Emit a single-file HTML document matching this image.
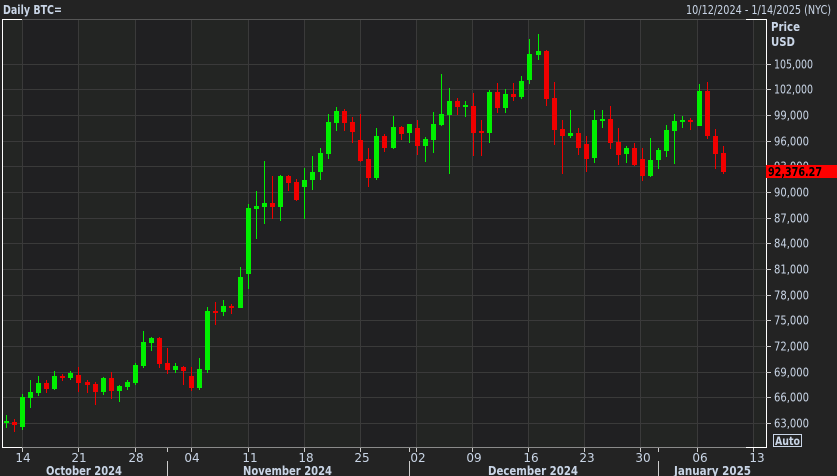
<!DOCTYPE html>
<html><head><meta charset="utf-8"><style>
html,body{margin:0;padding:0;background:#232323;width:837px;height:476px;overflow:hidden}
svg{display:block}
text{font-family:"DejaVu Sans","Liberation Sans",sans-serif;fill:#c9d5e6}
</style></head><body>
<svg width="837" height="476" viewBox="0 0 837 476" xmlns="http://www.w3.org/2000/svg">
<rect x="0" y="0" width="837" height="476" fill="#232323"/>
<rect x="2" y="19" width="764" height="428" fill="#202022"/>
<g fill="#232523">
<rect x="2" y="19" width="20" height="428"/><rect x="78" y="19" width="57" height="428"/><rect x="191" y="19" width="57" height="428"/><rect x="304" y="19" width="56" height="428"/><rect x="416" y="19" width="56" height="428"/><rect x="528" y="19" width="56" height="428"/><rect x="640" y="19" width="57" height="428"/><rect x="753" y="19" width="13" height="428"/>
</g>
<g stroke="#3a3a3a" stroke-width="1">
<line x1="22.5" y1="19" x2="22.5" y2="447"/><line x1="78.5" y1="19" x2="78.5" y2="447"/><line x1="135.5" y1="19" x2="135.5" y2="447"/><line x1="191.5" y1="19" x2="191.5" y2="447"/><line x1="248.5" y1="19" x2="248.5" y2="447"/><line x1="304.5" y1="19" x2="304.5" y2="447"/><line x1="360.5" y1="19" x2="360.5" y2="447"/><line x1="416.5" y1="19" x2="416.5" y2="447"/><line x1="472.5" y1="19" x2="472.5" y2="447"/><line x1="528.5" y1="19" x2="528.5" y2="447"/><line x1="584.5" y1="19" x2="584.5" y2="447"/><line x1="640.5" y1="19" x2="640.5" y2="447"/><line x1="697.5" y1="19" x2="697.5" y2="447"/><line x1="753.5" y1="19" x2="753.5" y2="447"/>
<line x1="2" y1="64.5" x2="766" y2="64.5"/><line x1="2" y1="89.5" x2="766" y2="89.5"/><line x1="2" y1="115.5" x2="766" y2="115.5"/><line x1="2" y1="141.5" x2="766" y2="141.5"/><line x1="2" y1="166.5" x2="766" y2="166.5"/><line x1="2" y1="192.5" x2="766" y2="192.5"/><line x1="2" y1="218.5" x2="766" y2="218.5"/><line x1="2" y1="243.5" x2="766" y2="243.5"/><line x1="2" y1="269.5" x2="766" y2="269.5"/><line x1="2" y1="295.5" x2="766" y2="295.5"/><line x1="2" y1="320.5" x2="766" y2="320.5"/><line x1="2" y1="346.5" x2="766" y2="346.5"/><line x1="2" y1="372.5" x2="766" y2="372.5"/><line x1="2" y1="397.5" x2="766" y2="397.5"/><line x1="2" y1="423.5" x2="766" y2="423.5"/>
</g>
<line x1="2" y1="19.5" x2="766" y2="19.5" stroke="#555" />
<line x1="2" y1="447.5" x2="766" y2="447.5" stroke="#8a8a8a" />
<g stroke="#fff" stroke-width="1" fill="none">
<polyline points="2.5,447 2.5,19.5 22,19.5"/>
<polyline points="746,19.5 766.5,19.5 766.5,447.5 746,447.5"/>
<line x1="2" y1="447.5" x2="22" y2="447.5"/>
</g>
<g stroke="#ccc">
<line x1="766" y1="64.5" x2="771" y2="64.5"/><line x1="766" y1="89.5" x2="771" y2="89.5"/><line x1="766" y1="115.5" x2="771" y2="115.5"/><line x1="766" y1="141.5" x2="771" y2="141.5"/><line x1="766" y1="192.5" x2="771" y2="192.5"/><line x1="766" y1="218.5" x2="771" y2="218.5"/><line x1="766" y1="243.5" x2="771" y2="243.5"/><line x1="766" y1="269.5" x2="771" y2="269.5"/><line x1="766" y1="295.5" x2="771" y2="295.5"/><line x1="766" y1="320.5" x2="771" y2="320.5"/><line x1="766" y1="346.5" x2="771" y2="346.5"/><line x1="766" y1="372.5" x2="771" y2="372.5"/><line x1="766" y1="397.5" x2="771" y2="397.5"/><line x1="766" y1="423.5" x2="771" y2="423.5"/>
<line x1="22.5" y1="448" x2="22.5" y2="452"/><line x1="78.5" y1="448" x2="78.5" y2="452"/><line x1="135.5" y1="448" x2="135.5" y2="452"/><line x1="191.5" y1="448" x2="191.5" y2="452"/><line x1="248.5" y1="448" x2="248.5" y2="452"/><line x1="304.5" y1="448" x2="304.5" y2="452"/><line x1="360.5" y1="448" x2="360.5" y2="452"/><line x1="416.5" y1="448" x2="416.5" y2="452"/><line x1="472.5" y1="448" x2="472.5" y2="452"/><line x1="528.5" y1="448" x2="528.5" y2="452"/><line x1="584.5" y1="448" x2="584.5" y2="452"/><line x1="640.5" y1="448" x2="640.5" y2="452"/><line x1="697.5" y1="448" x2="697.5" y2="452"/><line x1="753.5" y1="448" x2="753.5" y2="452"/>
<line x1="167.5" y1="448" x2="167.5" y2="452"/><line x1="409.5" y1="448" x2="409.5" y2="452"/><line x1="658.5" y1="448" x2="658.5" y2="452"/>
<line x1="167.5" y1="461" x2="167.5" y2="476"/><line x1="409.5" y1="461" x2="409.5" y2="476"/><line x1="658.5" y1="461" x2="658.5" y2="476"/>
</g>
<text x="3" y="14" font-size="12" font-weight="bold" textLength="59" lengthAdjust="spacingAndGlyphs">Daily BTC=</text>
<text x="686" y="14" font-size="12" textLength="145" lengthAdjust="spacingAndGlyphs">10/12/2024 - 1/14/2025 (NYC)</text>
<text x="771" y="31" font-size="12" font-weight="bold" textLength="29" lengthAdjust="spacingAndGlyphs">Price</text>
<text x="771" y="46" font-size="12" font-weight="bold" textLength="24" lengthAdjust="spacingAndGlyphs">USD</text>
<g font-size="12">
<text x="774" y="68.5" textLength="39" lengthAdjust="spacingAndGlyphs">105,000</text><text x="774" y="93.5" textLength="39" lengthAdjust="spacingAndGlyphs">102,000</text><text x="774" y="119.5" textLength="35" lengthAdjust="spacingAndGlyphs">99,000</text><text x="774" y="145.5" textLength="35" lengthAdjust="spacingAndGlyphs">96,000</text><text x="774" y="170.5" textLength="35" lengthAdjust="spacingAndGlyphs">93,000</text><text x="774" y="196.5" textLength="35" lengthAdjust="spacingAndGlyphs">90,000</text><text x="774" y="222.5" textLength="35" lengthAdjust="spacingAndGlyphs">87,000</text><text x="774" y="247.5" textLength="35" lengthAdjust="spacingAndGlyphs">84,000</text><text x="774" y="273.5" textLength="35" lengthAdjust="spacingAndGlyphs">81,000</text><text x="774" y="299.5" textLength="35" lengthAdjust="spacingAndGlyphs">78,000</text><text x="774" y="324.5" textLength="35" lengthAdjust="spacingAndGlyphs">75,000</text><text x="774" y="350.5" textLength="35" lengthAdjust="spacingAndGlyphs">72,000</text><text x="774" y="376.5" textLength="35" lengthAdjust="spacingAndGlyphs">69,000</text><text x="774" y="401.5" textLength="35" lengthAdjust="spacingAndGlyphs">66,000</text><text x="774" y="427.5" textLength="35" lengthAdjust="spacingAndGlyphs">63,000</text>
</g>
<rect x="766" y="165" width="71" height="13" fill="#ff0000"/>
<text x="768" y="176" font-size="12" font-weight="bold" style="fill:#000" textLength="54" lengthAdjust="spacingAndGlyphs">92,376.27</text>
<rect x="773.5" y="434.5" width="28" height="12" fill="none" stroke="#c9d5e6"/>
<text x="775" y="445" font-size="11.5" font-weight="bold" textLength="25" lengthAdjust="spacingAndGlyphs">Auto</text>
<g font-size="12" text-anchor="middle">
<text x="23" y="462">14</text><text x="79" y="462">21</text><text x="136" y="462">28</text><text x="192" y="462">04</text><text x="250" y="462">11</text><text x="306" y="462">18</text><text x="362" y="462">25</text><text x="418" y="462">02</text><text x="474" y="462">09</text><text x="531" y="462">16</text><text x="587" y="462">23</text><text x="643" y="462">30</text><text x="700" y="462">06</text><text x="757" y="462">13</text>
</g>
<g font-size="12" font-weight="bold">
<text x="46" y="475" textLength="76" lengthAdjust="spacingAndGlyphs">October 2024</text><text x="243" y="475" textLength="89" lengthAdjust="spacingAndGlyphs">November 2024</text><text x="488" y="475" textLength="90" lengthAdjust="spacingAndGlyphs">December 2024</text><text x="674" y="475" textLength="77" lengthAdjust="spacingAndGlyphs">January 2025</text>
</g>
</svg>
<svg width="837" height="476" style="position:absolute;left:0;top:0" xmlns="http://www.w3.org/2000/svg">
<g id="cd"></g>
</svg>
<script>
var d=[[6,421,423,415,428,'g'],[14,422,425,419,432,'r'],[22,397,427,394,430,'g'],[30,392,398,380,408,'g'],[38,383,393,376,396,'g'],[46,383,389,380,393,'r'],[54,376,389,371,390,'g'],[62,376,378,374,381,'r'],[70,373,378,371,380,'g'],[78,375,383,367,392,'r'],[87,382,385,380,393,'r'],[95,384,392,382,405,'r'],[103,378,392,377,395,'g'],[111,378,391,372,399,'r'],[119,386,391,385,402,'g'],[127,382,387,380,390,'g'],[135,365,383,363,385,'g'],[143,342,366,331,368,'g'],[151,338,343,337,351,'g'],[159,338,364,337,368,'r'],[167,363,370,348,374,'r'],[175,366,370,363,373,'g'],[183,367,371,366,385,'r'],[191,376,388,367,391,'r'],[199,369,388,358,390,'g'],[207,311,370,307,373,'g'],[215,311,313,302,325,'r'],[223,306,312,300,316,'g'],[231,306,308,304,314,'r'],[240,277,308,267,308,'g'],[248,208,274,204,289,'g'],[256,206,209,191,239,'g'],[264,203,207,161,224,'g'],[272,203,207,176,219,'r'],[280,176,207,175,221,'g'],[288,176,183,175,191,'r'],[296,182,200,179,201,'r'],[304,180,187,168,219,'g'],[312,172,180,156,190,'g'],[320,153,172,148,180,'g'],[328,122,154,114,159,'g'],[336,111,123,107,131,'g'],[344,111,123,109,131,'r'],[352,122,132,117,143,'r'],[360,140,161,114,162,'r'],[368,159,178,148,187,'r'],[376,136,178,128,180,'g'],[384,136,148,134,152,'r'],[393,127,148,116,149,'g'],[401,127,134,126,140,'r'],[409,124,133,124,143,'g'],[417,128,146,120,155,'r'],[425,139,146,137,162,'g'],[433,124,140,112,153,'g'],[441,114,125,74,126,'g'],[449,101,115,88,174,'g'],[457,101,107,98,115,'r'],[465,105,107,101,117,'g'],[473,106,133,93,156,'r'],[481,131,133,120,156,'r'],[489,92,133,90,143,'g'],[497,92,108,83,113,'r'],[505,94,108,89,113,'g'],[513,94,97,83,101,'r'],[521,81,97,76,99,'g'],[529,54,80,39,84,'g'],[538,51,55,34,60,'g'],[546,51,99,50,106,'r'],[554,98,130,82,145,'r'],[562,129,136,120,174,'r'],[570,133,136,110,138,'g'],[578,133,148,128,155,'r'],[586,144,159,136,172,'r'],[594,120,158,110,163,'g'],[602,119,121,110,128,'g'],[610,119,143,106,149,'r'],[618,142,155,128,165,'r'],[626,148,154,146,163,'g'],[634,148,165,143,166,'r'],[642,159,176,148,181,'r'],[650,160,176,138,177,'g'],[658,150,160,148,169,'g'],[666,130,151,125,157,'g'],[674,121,131,114,164,'g'],[682,120,122,116,128,'g'],[690,120,122,118,130,'r'],[699,91,126,84,126,'g'],[707,91,136,82,139,'r'],[715,136,154,129,169,'r'],[723,153,172,146,174,'r']];
var s='';d.forEach(function(c){var col=c[5]=='g'?'#00f000':'#f00000';var h=Math.max(2,c[2]-c[1]);s+='<rect x="'+c[0]+'" y="'+c[3]+'" width="1" height="'+(c[4]-c[3])+'" fill="'+col+'"/><rect x="'+(c[0]-2)+'" y="'+c[1]+'" width="5" height="'+h+'" fill="'+col+'"/>';});
document.getElementById('cd').innerHTML=s;
</script>
</body></html>
